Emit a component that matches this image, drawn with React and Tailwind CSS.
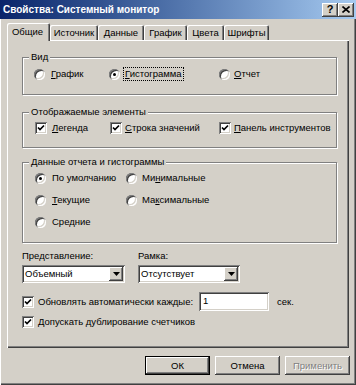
import React from "react";

const raised =
  "shadow-[inset_-1px_-1px_0_#404040,inset_1px_1px_0_#fff,inset_-2px_-2px_0_#808080,inset_2px_2px_0_#d4d0c8]";
const sunken =
  "shadow-[inset_1px_1px_0_#808080,inset_-1px_-1px_0_#fff,inset_2px_2px_0_#404040,inset_-2px_-2px_0_#d4d0c8]";

function Radio({ checked }) {
  return (
    <span className={`relative w-[11px] h-[11px] shrink-0 rounded-full bg-white ${sunken}`}>
      {checked && <span className="absolute left-[4px] top-[4px] w-[3px] h-[3px] rounded-full bg-black" />}
    </span>
  );
}

function Check() {
  return (
    <span className={`w-[12px] h-[12px] shrink-0 bg-white flex items-center justify-center ${sunken}`}>
      <svg width="8" height="8" viewBox="0 0 8 8">
        <polyline points="1,3.5 3,5.5 7,1.5" fill="none" stroke="#000" strokeWidth="1.7" />
      </svg>
    </span>
  );
}

function U({ children }) {
  return <span className="underline underline-offset-[1px]">{children}</span>;
}

function Group({ title, className, children }) {
  return (
    <div className={`relative border border-[#808080] shadow-[inset_1px_1px_0_#fff,1px_1px_0_#fff] ${className}`}>
      <span className="absolute -top-[7px] left-[6px] px-[2px] bg-[#d4d0c8] leading-[12px] whitespace-nowrap">
        {title}
      </span>
      {children}
    </div>
  );
}

function Select({ value, w }) {
  return (
    <div className={`${w} h-[18px] bg-white flex items-center pl-[3px] pr-[2px] ${sunken}`}>
      <span className="flex-1 leading-[12px]">{value}</span>
      <span className={`w-[14px] h-[14px] bg-[#d4d0c8] flex items-center justify-center ${raised}`}>
        <svg width="7" height="4" viewBox="0 0 7 4">
          <polygon points="0,0 7,0 3.5,4" fill="#000" />
        </svg>
      </span>
    </div>
  );
}

function Button({ children, def, disabled }) {
  return (
    <div
      className={`w-[65px] h-[19px] flex items-center justify-center leading-[12px] ${
        def
          ? "shadow-[inset_0_0_0_1px_#000,inset_-2px_-2px_0_#404040,inset_2px_2px_0_#fff,inset_-3px_-3px_0_#808080]"
          : raised
      } ${disabled ? "text-[#808080] [text-shadow:1px_1px_0_#fff]" : ""}`}
    >
      {children}
    </div>
  );
}

export default function App() {
  const tabs = [
    ["Общие", 43],
    ["Источник", 48],
    ["Данные", 46],
    ["График", 43],
    ["Цвета", 37],
    ["Шрифты", 45],
  ];
  return (
    <div className="w-[356px] h-[385px] bg-[#d4d0c8] overflow-hidden font-['Liberation_Sans',Arial,sans-serif] text-[9.5px] text-black shadow-[inset_1px_1px_0_#fff,inset_-1px_-1px_0_#404040,inset_-2px_-2px_0_#808080]">
      {/* Title bar */}
      <div className="h-[19px] flex items-center bg-gradient-to-r from-[#0a246a] to-[#a6caf0] pl-[3px] pr-[2px]">
        <span className="flex-1 text-white font-bold text-[10px] leading-[13px] whitespace-nowrap">
          Свойства: Системный монитор
        </span>
        <span className={`w-[16px] h-[14px] bg-[#d4d0c8] flex items-center justify-center font-bold text-[11px] leading-none ${raised}`}>
          ?
        </span>
        <span className={`w-[16px] h-[14px] bg-[#d4d0c8] flex items-center justify-center ${raised}`}>
          <svg width="8" height="7" viewBox="0 0 8 7">
            <path d="M0.5 0.5 L7.5 6.5 M7.5 0.5 L0.5 6.5" stroke="#000" strokeWidth="1.6" />
          </svg>
        </span>
      </div>

      {/* Tabs */}
      <div className="mt-[4px] ml-[9px] h-[17px] flex items-start">
        {tabs.map(([t, w], i) => (
          <div
            key={t}
            style={{ width: w }}
            className={`flex items-center justify-center leading-[12px] bg-[#d4d0c8] rounded-t-[2px] shadow-[inset_1px_1px_0_#fff,inset_-1px_0_0_#404040,inset_-2px_0_0_#808080] ${
              i === 0 ? "relative z-10 h-[18px] -ml-[2px] pr-[2px]" : "mt-[2px] h-[15px]"
            }`}
          >
            {t}
          </div>
        ))}
      </div>

      {/* Panel */}
      <div className="relative mx-[7px] h-[308px] pt-[17px] pl-[15px] pr-[12px] shadow-[inset_1px_1px_0_#fff,inset_-1px_-1px_0_#404040,inset_-2px_-2px_0_#808080]">
        <Group title="Вид" className="h-[38px]">
          <div className="pt-[10px] pl-[11px] flex items-center leading-[12px]">
            <div className="w-[75px] flex items-center gap-[6px]">
              <Radio />
              <span>
                <U>Г</U>рафик
              </span>
            </div>
            <div className="w-[110px] flex items-center gap-[4px]">
              <Radio checked />
              <span className="outline outline-1 outline-dotted outline-black px-[1px]">
                <U>Г</U>истограмма
              </span>
            </div>
            <div className="flex items-center gap-[4px]">
              <Radio />
              <span>
                <U>О</U>тчет
              </span>
            </div>
          </div>
        </Group>

        <Group title="Отображаемые элементы" className="mt-[17px] h-[36px]">
          <div className="pt-[9px] pl-[12px] flex items-center leading-[12px]">
            <div className="w-[75px] flex items-center gap-[5px]">
              <Check />
              <span>
                <U>Л</U>егенда
              </span>
            </div>
            <div className="w-[109px] flex items-center gap-[3px]">
              <Check />
              <span>
                <U>С</U>трока значений
              </span>
            </div>
            <div className="flex items-center gap-[3px]">
              <Check />
              <span className="whitespace-nowrap">
                <U>П</U>анель инструментов
              </span>
            </div>
          </div>
        </Group>

        <Group title="Данные отчета и гистограммы" className="mt-[14px] h-[81px]">
          <div className="pt-[9px] pl-[12px] flex flex-col gap-[10px] leading-[12px]">
            <div className="flex items-center">
              <div className="w-[91px] flex items-center gap-[6px]">
                <Radio checked />
                <span>По умолчанию</span>
              </div>
              <div className="flex items-center gap-[5px]">
                <Radio />
                <span>
                  Ми<U>н</U>имальные
                </span>
              </div>
            </div>
            <div className="flex items-center">
              <div className="w-[91px] flex items-center gap-[6px]">
                <Radio />
                <span>
                  <U>Т</U>екущие
                </span>
              </div>
              <div className="flex items-center gap-[5px]">
                <Radio />
                <span>
                  Ма<U>к</U>симальные
                </span>
              </div>
            </div>
            <div className="flex items-center gap-[6px]">
              <Radio />
              <span>Средние</span>
            </div>
          </div>
        </Group>

        <div className="mt-[7px] flex gap-[13px] leading-[12px]">
          <div>
            <div>Представление:</div>
            <div className="mt-[3px]">
              <Select value="Объемный" w="w-[103px]" />
            </div>
          </div>
          <div>
            <div>Рамка:</div>
            <div className="mt-[3px]">
              <Select value="Отсутствует" w="w-[102px]" />
            </div>
          </div>
        </div>

        <div className="mt-[9px] h-[19px] flex items-center leading-[12px]">
          <Check />
          <span className="ml-[4px] w-[161px] shrink-0 whitespace-nowrap">Обновлять автоматически каждые:</span>
          <div className={`w-[70px] h-[19px] bg-white pl-[4px] pt-[3px] ${sunken}`}>1</div>
          <span className="ml-[8px]">сек.</span>
        </div>

        <div className="mt-[5px] flex items-center leading-[12px]">
          <Check />
          <span className="ml-[4px]">Допускать дублирование счетчиков</span>
        </div>
      </div>

      {/* Buttons */}
      <div className="mt-[8px] flex justify-end gap-[5px] pr-[6px]">
        <Button def>ОК</Button>
        <Button>Отмена</Button>
        <Button disabled>Применить</Button>
      </div>
    </div>
  );
}
